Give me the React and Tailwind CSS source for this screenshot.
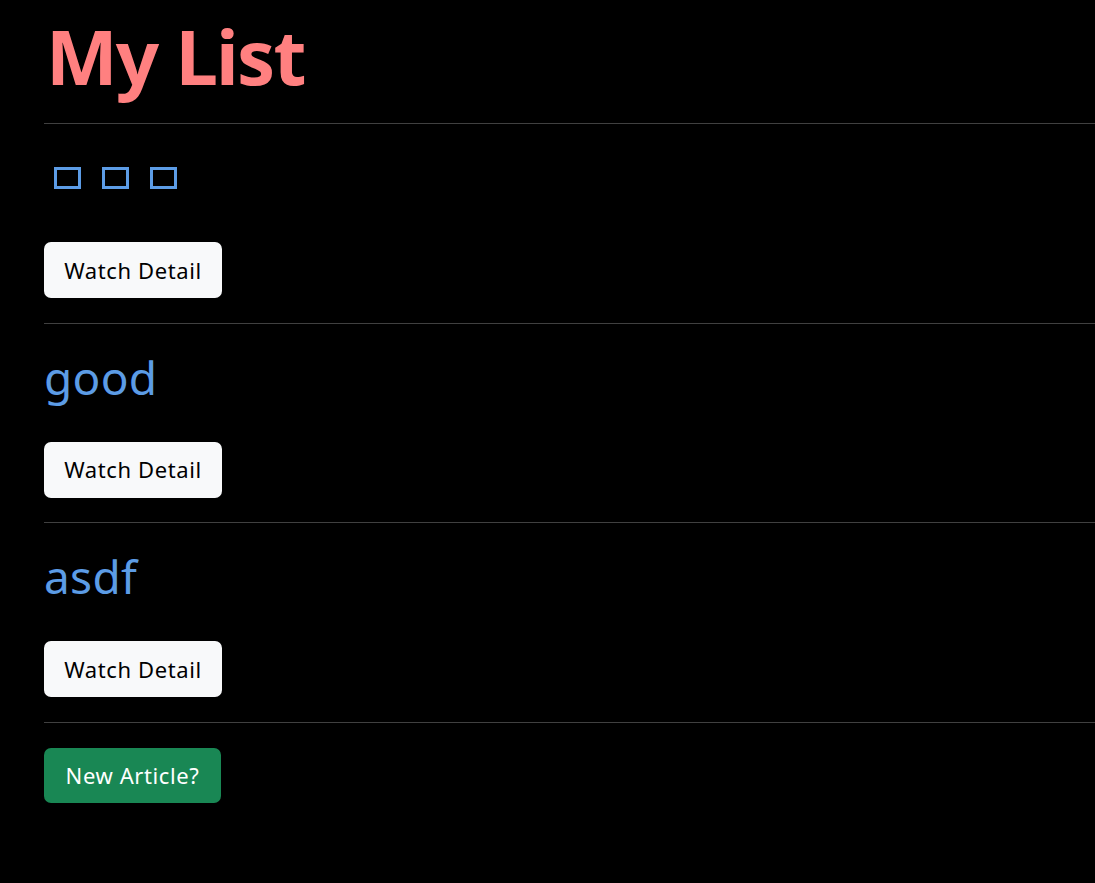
import React from 'react';

const articles = [
  { id: 1, title: null },
  { id: 2, title: 'good' },
  { id: 3, title: 'asdf' },
];

// the first title came out as three missing-glyph boxes
const Tofu = () => (
  <span className="inline-block w-[27px] h-[22px] border-[3px] border-[#5c9ce6] ml-[10px] mr-[11px] mb-[6px]" />
);

const App = () => {
  return (
    <div className="min-h-screen bg-black text-white pl-[44px]" style={{ fontFamily: '"Noto Sans", "Noto Sans CJK KR", sans-serif' }}>
      <h1 className="pt-[10px] text-[76px] leading-[1.2] font-bold tracking-[-1.8px] text-[#ff8080] pl-[2px]">My List</h1>
      <div className="mt-[22px]">
        {articles.map(article => (
          <div key={article.id}>
            <hr className="border-0 border-t border-[#404040]" />
            <h2 className="mt-[26px] text-[46px] leading-[1.2] tracking-[0.3px] text-[#5c9ce6] h-[55px]">
              {article.title ?? (
                <>
                  <Tofu />
                  <Tofu />
                  <Tofu />
                </>
              )}
            </h2>
            <button className="mt-[37px] mb-[24.6px] h-[56px] w-[178px] inline-flex items-center justify-center rounded-[7px] bg-[#f8f9fa] text-black text-[22px] tracking-[0.6px]">
              Watch Detail
            </button>
          </div>
        ))}
        <hr className="border-0 border-t border-[#404040]" />
        <button className="mt-[25px] h-[55px] w-[177px] inline-flex items-center justify-center rounded-[7px] bg-[#198754] text-white text-[22px] tracking-[0.6px]">
          New Article?
        </button>
      </div>
    </div>
  );
};

export default App;
